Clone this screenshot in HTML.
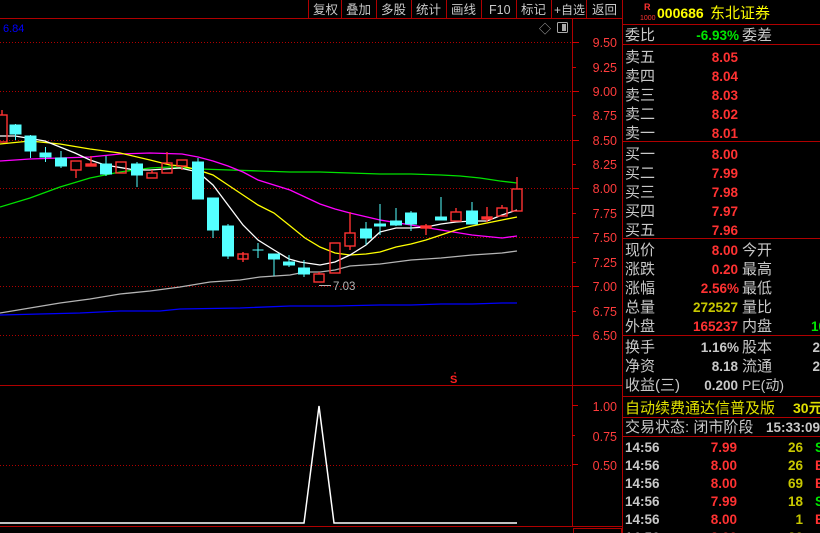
<!DOCTYPE html>
<html><head><meta charset="utf-8"><style>
html,body{margin:0;padding:0;background:#000;width:820px;height:533px;overflow:hidden}
svg{display:block}
.t{font-family:"Liberation Sans","Noto Sans CJK SC",sans-serif}
</style></head><body>
<svg width="820" height="533" viewBox="0 0 820 533" xmlns="http://www.w3.org/2000/svg" class="t">
<rect width="820" height="533" fill="#000"/>
<g stroke="#b00000" stroke-width="1">
<line x1="0" y1="18.5" x2="622" y2="18.5"/>
<line x1="308.5" y1="0" x2="308.5" y2="18"/><line x1="341.5" y1="0" x2="341.5" y2="18"/><line x1="376.5" y1="0" x2="376.5" y2="18"/><line x1="411.5" y1="0" x2="411.5" y2="18"/><line x1="446.5" y1="0" x2="446.5" y2="18"/><line x1="481.5" y1="0" x2="481.5" y2="18"/><line x1="516.5" y1="0" x2="516.5" y2="18"/><line x1="551.5" y1="0" x2="551.5" y2="18"/><line x1="586.5" y1="0" x2="586.5" y2="18"/><line x1="622.5" y1="0" x2="622.5" y2="533"/>
<line x1="572.5" y1="18" x2="572.5" y2="526"/>
<line x1="0" y1="385.5" x2="622" y2="385.5"/>
<line x1="0" y1="526.5" x2="622" y2="526.5"/>
<rect x="573.5" y="528.5" width="48" height="6" fill="none"/>
</g>
<g fill="#c8c8c8" font-size="12.5">
<text x="313" y="14">复权</text><text x="346" y="14">叠加</text><text x="381" y="14">多股</text><text x="416" y="14">统计</text><text x="451" y="14">画线</text><text x="489" y="14">F10</text><text x="521" y="14">标记</text><text x="554" y="14" font-size="12">+自选</text><text x="592" y="14">返回</text>
</g>
<text x="3" y="32" fill="#0000ff" font-size="11">6.84</text>
<text x="539" y="33" fill="#aaa" font-size="12">◇</text>
<rect x="557.5" y="22.5" width="10" height="10" rx="1" fill="none" stroke="#aaa"/><rect x="562" y="24" width="4" height="7" fill="#aaa"/>
<g stroke="#b00000" stroke-dasharray="1,2">
<line x1="0" y1="42.5" x2="572" y2="42.5"/><line x1="0" y1="91.5" x2="572" y2="91.5"/><line x1="0" y1="140.5" x2="572" y2="140.5"/><line x1="0" y1="188.5" x2="572" y2="188.5"/><line x1="0" y1="237.5" x2="572" y2="237.5"/><line x1="0" y1="286.5" x2="572" y2="286.5"/><line x1="0" y1="335.5" x2="572" y2="335.5"/><line x1="0" y1="465.5" x2="572" y2="465.5"/>
</g>
<g stroke="#d00000">
<line x1="572" y1="42.5" x2="579" y2="42.5"/><line x1="572" y1="67.5" x2="576" y2="67.5"/><line x1="572" y1="91.5" x2="579" y2="91.5"/><line x1="572" y1="115.5" x2="576" y2="115.5"/><line x1="572" y1="140.5" x2="579" y2="140.5"/><line x1="572" y1="164.5" x2="576" y2="164.5"/><line x1="572" y1="188.5" x2="579" y2="188.5"/><line x1="572" y1="213.5" x2="576" y2="213.5"/><line x1="572" y1="237.5" x2="579" y2="237.5"/><line x1="572" y1="262.5" x2="576" y2="262.5"/><line x1="572" y1="286.5" x2="579" y2="286.5"/><line x1="572" y1="311.5" x2="576" y2="311.5"/><line x1="572" y1="335.5" x2="579" y2="335.5"/>
<line x1="572" y1="405.5" x2="578" y2="405.5"/><line x1="572" y1="435.5" x2="575" y2="435.5"/><line x1="572" y1="464.5" x2="578" y2="464.5"/>
</g>
<g fill="#ff3c3c" font-size="12.5" text-anchor="end">
<text x="617" y="47">9.50</text><text x="617" y="72">9.25</text><text x="617" y="96">9.00</text><text x="617" y="120">8.75</text><text x="617" y="145">8.50</text><text x="617" y="169">8.25</text><text x="617" y="193">8.00</text><text x="617" y="218">7.75</text><text x="617" y="242">7.50</text><text x="617" y="267">7.25</text><text x="617" y="291">7.00</text><text x="617" y="316">6.75</text><text x="617" y="340">6.50</text>
<text x="617" y="411">1.00</text><text x="617" y="441">0.75</text><text x="617" y="470">0.50</text>
</g>
<g fill="none" stroke-width="1.3">
<polyline stroke="#0000ff" points="0,315 40,314 80,313 120,311 160,311 180,309 240,308 290,306 335,306 380,305 411,305 441,304 472,304 502,303 517,303"/>
<polyline stroke="#b4b4b4" points="0,313 30,308 60,303 90,299 120,294 150,291 180,287 210,282 240,280 260,277 290,275 305,272 320,272 335,270 350,266 380,264 411,260 441,258 472,255 502,253 517,251"/>
<polyline stroke="#00e000" points="0,207 30,198 60,187 90,178 120,172 150,168 170,167 200,169 230,170 260,171 290,172 320,172 350,173 380,174 411,174 441,175 460,176 480,178 500,181 517,183"/>
<polyline stroke="#ff00ff" points="0,161 30,159 60,158 90,157 120,154 150,153 182,154 198,157 213,161 228,166 243,172 258,180 274,185 290,190 305,197 320,204 335,209 350,213 380,220 411,225 441,230 472,235 502,238 517,236"/>
<polyline stroke="#ffff00" points="0,144 30,141 60,144 90,149 120,153 150,160 170,165 182,166 198,170 213,175 228,185 243,195 258,205 274,213 289,225 305,238 320,247 335,253 350,255 366,254 380,252 396,247 411,244 426,240 441,235 456,230 472,226 487,223 502,220 517,217"/>
<polyline stroke="#ffffff" points="0,136 15,136 45,141 75,153 90,160 105,165 135,170 150,170 165,169 180,168 198,172 213,185 228,205 243,225 258,240 274,250 289,259 300,262 320,265 335,262 350,255 366,245 380,232 396,228 411,228 426,227 441,224 456,222 472,221 487,221 502,215 517,210"/>
</g>
<g stroke="#54ffff" fill="#54ffff" stroke-width="1">
<line x1="15.5" y1="124" x2="15.5" y2="140"/><rect x="10" y="125" width="11" height="9"/>
<line x1="30.5" y1="135" x2="30.5" y2="158"/><rect x="25" y="136" width="11" height="15"/>
<line x1="45.5" y1="147" x2="45.5" y2="162"/><rect x="40" y="153" width="11" height="4"/>
<line x1="61" y1="151" x2="61" y2="168"/><rect x="55.5" y="158" width="11" height="8"/>
<line x1="106" y1="156" x2="106" y2="176"/><rect x="100.5" y="164" width="11" height="10"/>
<line x1="137" y1="162" x2="137" y2="187"/><rect x="131.5" y="164" width="11" height="11"/>
<line x1="198" y1="158" x2="198" y2="162"/><rect x="192.5" y="162" width="11" height="37"/>
<line x1="213" y1="198" x2="213" y2="238"/><rect x="207.5" y="198" width="11" height="32"/>
<line x1="228" y1="224" x2="228" y2="259"/><rect x="222.5" y="226" width="11" height="30"/>
<line x1="258" y1="243" x2="258" y2="258"/><line x1="252.5" y1="250" x2="263.5" y2="250"/>
<line x1="274" y1="254" x2="274" y2="276"/><rect x="268.5" y="254" width="11" height="5"/>
<line x1="289" y1="255" x2="289" y2="267"/><rect x="283.5" y="262" width="11" height="3"/>
<line x1="304" y1="260" x2="304" y2="277"/><rect x="298.5" y="268" width="11" height="6"/>
<line x1="366" y1="222" x2="366" y2="245"/><rect x="360.5" y="229" width="11" height="9"/>
<line x1="380" y1="204" x2="380" y2="235"/><rect x="374.5" y="224" width="11" height="2"/>
<line x1="396" y1="208" x2="396" y2="226"/><rect x="390.5" y="221" width="11" height="4"/>
<line x1="411" y1="211" x2="411" y2="231"/><rect x="405.5" y="213" width="11" height="11"/>
<line x1="441" y1="197" x2="441" y2="220"/><rect x="435.5" y="217" width="11" height="3"/>
<line x1="472" y1="202" x2="472" y2="224"/><rect x="466.5" y="211" width="11" height="13"/>
</g>
<g stroke="#ff3232" fill="none" stroke-width="1.4">
<line x1="2" y1="110" x2="2" y2="115"/><rect x="-3" y="115" width="10" height="27"/>
<line x1="76" y1="170" x2="76" y2="178"/><rect x="71" y="161" width="10" height="9"/>
<line x1="91" y1="156" x2="91" y2="166"/><rect x="86" y="164" width="10" height="2" fill="#ff3232"/>
<rect x="116" y="162" width="10" height="11"/>
<line x1="152" y1="170" x2="152" y2="173"/><rect x="147" y="173" width="10" height="5"/>
<line x1="167" y1="152" x2="167" y2="163"/><rect x="162" y="163" width="10" height="10"/>
<line x1="182" y1="166" x2="182" y2="170"/><rect x="177" y="160" width="10" height="6"/>
<line x1="243" y1="252" x2="243" y2="262"/><rect x="238" y="254" width="10" height="5"/>
<line x1="319" y1="272" x2="319" y2="274"/><rect x="314" y="274" width="10" height="8"/>
<rect x="330" y="243" width="10" height="30"/>
<line x1="350" y1="212" x2="350" y2="233"/><line x1="350" y1="246" x2="350" y2="250"/><rect x="345" y="233" width="10" height="13"/>
<line x1="426" y1="224" x2="426" y2="235"/><rect x="421" y="226" width="10" height="2" fill="#ff3232"/>
<line x1="456" y1="208" x2="456" y2="212"/><rect x="451" y="212" width="10" height="9"/>
<line x1="487" y1="207" x2="487" y2="222"/><rect x="482" y="217" width="10" height="2" fill="#ff3232"/>
<line x1="502" y1="205" x2="502" y2="208"/><rect x="497" y="208" width="10" height="8"/>
<line x1="517" y1="177" x2="517" y2="189"/><rect x="512" y="189" width="10" height="22"/>
</g>
<line x1="319" y1="285.5" x2="331" y2="285.5" stroke="#b4b4b4"/>
<text x="333" y="290" fill="#b4b4b4" font-size="11.5">7.03</text>
<text x="450" y="383" fill="#ff2020" font-size="11" font-weight="bold">S</text>
<line x1="454" y1="373" x2="456" y2="373" stroke="#ff2020"/>
<polyline fill="none" stroke="#fff" stroke-width="1.5" points="0,523 304,523 319,406 334,523 517,523"/>
<g stroke="#b00000" stroke-width="1">
<line x1="623" y1="24.5" x2="820" y2="24.5"/><line x1="623" y1="44.5" x2="820" y2="44.5"/><line x1="623" y1="141.5" x2="820" y2="141.5"/><line x1="623" y1="238.5" x2="820" y2="238.5"/><line x1="623" y1="335.5" x2="820" y2="335.5"/><line x1="623" y1="396.5" x2="820" y2="396.5"/><line x1="623" y1="417.5" x2="820" y2="417.5"/><line x1="623" y1="436.5" x2="820" y2="436.5"/>
</g>
<text x="644" y="10" fill="#ff3232" font-size="9" font-weight="bold">R</text>
<text x="640" y="20" fill="#ff3232" font-size="7">1000</text>
<text x="657" y="18" fill="#ffff00" font-size="14" font-weight="bold">000686</text>
<text x="710" y="18" fill="#ffff00" font-size="15">东北证券</text>
<g fill="#c8c8c8" font-size="15">
<text x="625" y="40">委比</text><text x="742" y="40">委差</text>
<text x="625" y="62">卖五</text><text x="625" y="81">卖四</text><text x="625" y="100">卖三</text><text x="625" y="119">卖二</text><text x="625" y="138">卖一</text>
<text x="625" y="159">买一</text><text x="625" y="178">买二</text><text x="625" y="197">买三</text><text x="625" y="216">买四</text><text x="625" y="235">买五</text>
<text x="625" y="255">现价</text><text x="742" y="255">今开</text>
<text x="625" y="274">涨跌</text><text x="742" y="274">最高</text>
<text x="625" y="293">涨幅</text><text x="742" y="293">最低</text>
<text x="625" y="312">总量</text><text x="742" y="312">量比</text>
<text x="625" y="331">外盘</text><text x="742" y="331">内盘</text>
<text x="625" y="352">换手</text><text x="742" y="352">股本</text>
<text x="625" y="371">净资</text><text x="742" y="371">流通</text>
<text x="625" y="390">收益(三)</text><text x="742" y="390" font-size="14">PE(动)</text>
<text x="625" y="432">交易状态: 闭市阶段</text>
</g>
<g font-size="13.5" font-weight="bold" text-anchor="end">
<text x="739" y="40" fill="#00e600">-6.93%</text>
<g fill="#ff3232"><text x="738" y="62">8.05</text><text x="738" y="81">8.04</text><text x="738" y="100">8.03</text><text x="738" y="119">8.02</text><text x="738" y="138">8.01</text><text x="738" y="159">8.00</text><text x="738" y="178">7.99</text><text x="738" y="197">7.98</text><text x="738" y="216">7.97</text><text x="738" y="235">7.96</text>
<text x="738" y="255">8.00</text><text x="738" y="274">0.20</text><text x="739" y="293">2.56%</text><text x="738" y="331">165237</text></g>
<text x="738" y="312" fill="#c8c800">272527</text>
<g fill="#c8c8c8"><text x="739" y="352">1.16%</text><text x="738" y="371">8.18</text><text x="738" y="390">0.200</text><text x="820" y="352">2</text><text x="820" y="371">2</text></g>
<text x="826" y="331" fill="#00e600">10</text>
</g>
<text x="625" y="413" fill="#e0e000" font-size="15">自动续费通达信普及版</text>
<text x="793" y="413" fill="#e0e000" font-size="14" font-weight="bold">30元</text>
<text x="766" y="432" fill="#c8c8c8" font-size="13.5" font-weight="bold">15:33:09</text>
<g font-size="13.5" font-weight="bold">
<g fill="#c8c8c8"><text x="625" y="452">14:56</text><text x="625" y="470">14:56</text><text x="625" y="488">14:56</text><text x="625" y="506">14:56</text><text x="625" y="524">14:56</text><text x="625" y="542">14:56</text></g>
<g fill="#ff3232" text-anchor="end"><text x="737" y="452">7.99</text><text x="737" y="470">8.00</text><text x="737" y="488">8.00</text><text x="737" y="506">7.99</text><text x="737" y="524">8.00</text><text x="737" y="542">8.00</text></g>
<g fill="#c8c800" text-anchor="end"><text x="803" y="452">26</text><text x="803" y="470">26</text><text x="803" y="488">69</text><text x="803" y="506">18</text><text x="803" y="524">1</text><text x="803" y="542">20</text></g>
<text x="815" y="452" fill="#00e600">S</text><text x="815" y="470" fill="#ff3232">B</text><text x="815" y="488" fill="#ff3232">B</text><text x="815" y="506" fill="#00e600">S</text><text x="815" y="524" fill="#ff3232">B</text>
</g>
</svg>
</body></html>
